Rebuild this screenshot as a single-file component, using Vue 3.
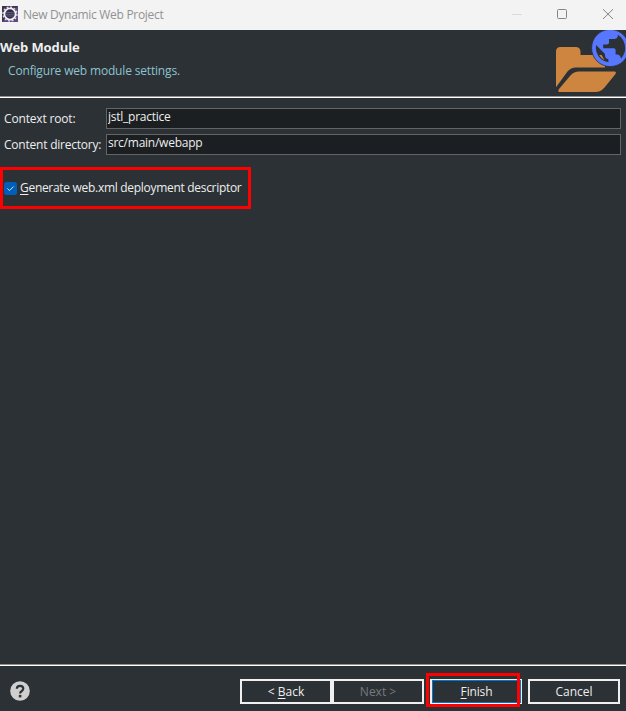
<script setup>
import { ref } from 'vue'

const contextRoot = ref('jstl_practice')
const contentDirectory = ref('src/main/webapp')
const generateDescriptor = ref(true)
</script>

<template>
  <div class="dialog">
    <header class="titlebar">
      <svg class="app-icon" width="16" height="16" viewBox="0 0 16 16">
        <rect width="16" height="16" fill="#5c4a80" />
        <path d="M0 0h16L0 16z" fill="#3d3150" />
        <circle cx="8" cy="8" r="5.6" fill="#302c4c" stroke="#f4f2f4" stroke-width="1.8" />
        <circle cx="8" cy="8" r="7" fill="none" stroke="#e2dfe6" stroke-width="1.3" stroke-dasharray="2 1.66" />
        <path d="M4.2 6.6h7.6M4 8.3h8M4.4 10h7.2" stroke="#77718f" stroke-width=".7" />
      </svg>
      <span class="title">New Dynamic Web Project</span>
      <svg class="window-buttons" width="112" height="30" viewBox="0 0 112 30" fill="none">
        <path d="M-2 14.5h10" stroke="#dcdcdc" />
        <rect x="43.5" y="9.5" width="9" height="9" rx="1" stroke="#858585" />
        <path d="M89 9.2l10 9.8M99 9.2l-10 9.8" stroke="#858585" />
      </svg>
    </header>

    <section class="banner">
      <div>
        <h1>Web Module</h1>
        <p>Configure web module settings.</p>
      </div>
      <svg class="banner-icon" width="72" height="66" viewBox="554 30 72 66">
        <path
          d="M556 87.3V51.5Q556 47 560.5 47H575.5Q580.5 47 580.5 52V55H601Q605 55 605 59V67.5H576Q571 67.5 567.5 71.5Z"
          fill="#cd853f"
        />
        <path
          d="M558.6 92Q557.8 90.5 559 89L570.4 75.5Q574 71.5 579 71.5H615Q616.7 72.2 615.5 74L604.5 87.5Q600.5 92 595.5 92Z"
          fill="#cd853f"
        />
        <circle cx="610.2" cy="48" r="18.6" fill="#5777ff" stroke="#2c3135" stroke-width=".8" />
        <path
          d="M617.8 34.8V36.5Q617.2 38.8 614.8 39H609V43Q608.8 44.4 607.2 44.6H603.2V48.2H614.2Q615.6 48.6 615.6 50.2V54.6H618Q620.3 55 621.2 58.4Q625.2 53.8 625.2 48Q624.6 38.6 617.8 34.8Z"
          fill="#2c3135"
        />
        <path d="M596.1 45Q595.4 48.4 596.4 51.8Q599.4 61 608.4 62.2V59.2Q605 58.8 605 55.5V54Z" fill="#2c3135" />
        <path d="M599.2 55H601.6L604.6 60.2Q601.4 58.9 599.2 55Z" fill="#cd853f" />
      </svg>
    </section>

    <main>
      <div class="fields">
        <label for="root" class="root-label">Context root:</label>
        <input id="root" v-model="contextRoot" type="text" spellcheck="false" />
        <label for="directory">Content directory:</label>
        <input id="directory" v-model="contentDirectory" type="text" spellcheck="false" />
      </div>
      <label class="descriptor">
        <input v-model="generateDescriptor" type="checkbox" />
        <svg width="13" height="13" viewBox="0 0 13 13">
          <rect width="13" height="13" rx="2.5" fill="#005fb8" />
          <path v-if="generateDescriptor" d="M3.4 6.5l2.1 2.1 4.1-4.1" fill="none" stroke="#d5e5f5" />
        </svg>
        <span><u>G</u>enerate web.xml deployment descriptor</span>
      </label>
    </main>

    <footer>
      <svg class="help" width="20" height="20" viewBox="0 0 20 20">
        <circle cx="10" cy="10" r="9.8" fill="#cfcfcf" />
        <path
          d="M6.8 7.7Q6.9 4.8 10.1 4.8Q13.3 4.8 13.3 7.6Q13.3 9 11.8 10Q10.1 11 10.1 12.6"
          fill="none"
          stroke="#2c3135"
          stroke-width="2.2"
        />
        <path d="M8.8 13.9h2.6v2.5h-2.6z" fill="#2c3135" />
      </svg>
      <div class="buttons">
        <button class="back" type="button"><span>&lt; <u>B</u>ack</span></button>
        <button class="next" type="button" disabled><span>Next &gt;</span></button>
        <button class="finish" type="button"><span><u>F</u>inish</span></button>
        <button class="cancel" type="button"><span>Cancel</span></button>
      </div>
    </footer>
  </div>
</template>

<style>
body {
  background: #2c3135;
}
</style>

<style scoped>
.dialog {
  display: flex;
  flex-direction: column;
  width: 626px;
  height: 711px;
  overflow: hidden;
  background: #2c3135;
  color: #eeeeee;
  font: 12px/16px 'Open Sans', 'Noto Sans', sans-serif;
  white-space: nowrap;
}
.titlebar {
  display: flex;
  flex: none;
  align-items: center;
  height: 30px;
  padding-left: 2px;
  background: #f3f3f3;
  color: #929292;
}
.title {
  letter-spacing: -0.3px;
}
.app-icon {
  margin: -2px 5px 0 0;
}
.window-buttons {
  margin-left: auto;
  overflow: visible;
}
.banner {
  display: flex;
  flex: none;
  justify-content: space-between;
  box-sizing: border-box;
  height: 68px;
  border-bottom: 1px solid #fff;
  box-shadow: inset 0 -1px #8f8f8f;
}
h1 {
  margin: 9px 0 0;
  font-size: 13px;
  line-height: 16px;
  letter-spacing: -0.1px;
}
.banner p {
  margin: 8px 0 0 8px;
  color: #8cc3cf;
  letter-spacing: -0.17px;
}
main {
  flex: 1;
}
.fields {
  display: grid;
  grid-template-columns: 102px 515px;
  grid-auto-rows: 21px;
  row-gap: 5px;
  padding: 10px 0 0 4px;
  line-height: 21px;
  letter-spacing: -0.22px;
}
.root-label {
  letter-spacing: -0.17px;
}
.fields input {
  box-sizing: border-box;
  width: 100%;
  height: 21px;
  padding: 0 1px 5px;
  border: 1px solid #646464;
  outline: 0;
  background: #1b1f21;
  color: #eeeeee;
  font: inherit;
  line-height: 14px;
  letter-spacing: -0.25px;
}
.descriptor {
  display: flex;
  align-items: center;
  box-sizing: border-box;
  width: 251px;
  height: 42px;
  margin-top: 12px;
  padding-left: 1px;
  border: 3px solid #f00;
  letter-spacing: -0.3px;
}
.descriptor input {
  display: none;
}
.descriptor svg {
  flex: none;
  margin-right: 3px;
}
u {
  text-underline-offset: 2px;
}
footer {
  display: flex;
  flex: none;
  justify-content: space-between;
  box-sizing: border-box;
  height: 47px;
  padding: 13px 6px 0 10px;
  border-top: 1px solid #8f8f8f;
  box-shadow: inset 0 1px #fff;
}
.help {
  margin-top: 3px;
}
.buttons {
  display: flex;
}
button {
  position: relative;
  box-sizing: border-box;
  width: 92px;
  height: 25px;
  margin: 1px 0 0;
  padding: 0;
  border: 2px solid #f0f0f0;
  background: #2c3135;
  color: #eeeeee;
  font: inherit;
}
button:disabled {
  color: #777a7c;
}
.finish,
.cancel {
  margin-left: 6px;
}
.finish {
  border-width: 1px 1px 1px 2px;
  box-shadow: inset 0 0 0 1px #0078d4;
  letter-spacing: -0.15px;
}
/* highlight frame drawn over the default button */
.finish::after {
  position: absolute;
  top: -7px;
  left: -6px;
  width: 88px;
  height: 28px;
  border: 3px solid #f00;
  content: '';
}
</style>
